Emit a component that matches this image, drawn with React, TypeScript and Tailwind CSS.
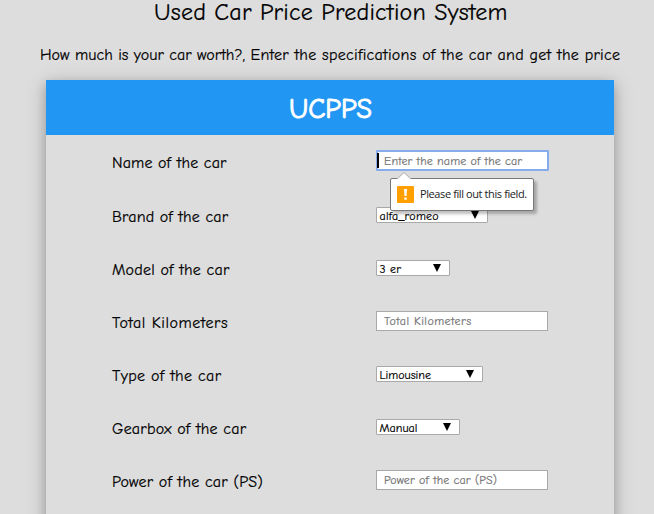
import type { ReactNode } from "react";

const comic = "font-['Comic_Sans_MS','Comic_Neue','Open_Sans',sans-serif]";

function Row({ label, spacing, height, children }: { label: string; spacing: string; height: string; children: ReactNode }) {
  return (
    <div className={`flex items-center ${height}`}>
      <div className={`w-[264px] shrink-0 whitespace-nowrap text-base leading-[22px] [-webkit-text-stroke:0.2px_#000] ${spacing}`}>{label}</div>
      {children}
    </div>
  );
}

function TextField({ placeholder, spacing }: { placeholder: string; spacing: string }) {
  return (
    <div className={`-mt-[3px] h-5 w-[172px] border border-[#a9a9a9] bg-white pl-[7px] text-xs leading-[18px] whitespace-nowrap text-[#757575] [-webkit-text-stroke:0.2px_#757575] ${spacing}`}>
      {placeholder}
    </div>
  );
}

function SelectField({ value, width, spacing, arrow }: { value: string; width: string; spacing: string; arrow: string }) {
  return (
    <div className={`-mt-[3px] flex h-4 items-center justify-between rounded-[1px] border border-[#a9a9a9] bg-white pl-[2.5px] ${arrow} ${width}`}>
      <span className={`pt-px text-xs leading-[14px] whitespace-nowrap [-webkit-text-stroke:0.2px_#000] ${spacing}`}>{value}</span>
      <svg className="h-2 w-2" viewBox="0 0 8 8">
        <path d="M0 0H8L4 8Z" fill="#000" />
      </svg>
    </div>
  );
}

export default function App() {
  return (
    <div className={`h-[514px] w-[654px] overflow-hidden bg-[#ddd] text-black ${comic}`}>
      <h1 className="ml-[154px] h-[30px] text-2xl leading-6 tracking-[0.22px] whitespace-nowrap [-webkit-text-stroke:0.2px_#000]">Used Car Price Prediction System</h1>
      <p className="ml-10 h-[50px] pt-[14px] text-base leading-[22px] whitespace-nowrap [-webkit-text-stroke:0.2px_#000]">
        <span className="tracking-[0.03px]">How much is your car worth?, </span>
        <span className="tracking-[0.27px]">Enter the specifications of the car and get the price</span>
      </p>
      <div className="ml-[46px] h-[600px] w-[568px] shadow-[0_4px_10px_0_rgba(0,0,0,0.2),0_4px_20px_0_rgba(0,0,0,0.19)]">
        <div className="flex h-[55px] items-center bg-[#2196f3] pt-0.5 pl-[243px]">
          <h2 className="text-[28px] leading-9 font-normal tracking-[-0.1px] text-white [-webkit-text-stroke:1px_#fff]">UCPPS</h2>
        </div>
        <div className="pl-[66px]">
          <Row label="Name of the car" spacing="tracking-[0.14px]" height="h-[55px]">
            <div className="relative -mt-1 h-[21px] w-[173px] rounded-[1px] border-2 border-[#86acee] bg-white pl-1.5">
              <div className="absolute top-px left-[-1px] h-[15px] w-0.5 bg-black" />
              <div className="pt-px text-xs leading-[17px] tracking-[0.14px] whitespace-nowrap text-[#757575] [-webkit-text-stroke:0.2px_#757575]">Enter the name of the car</div>
              <div className="absolute top-[26px] left-3 z-10 flex h-[33px] w-[144px] items-center rounded-[2px] border border-[#777] bg-white pl-1.5 shadow-[3px_3px_3px_rgba(0,0,0,0.25)]">
                <svg className="absolute top-[-7px] left-[6px] h-[8px] w-[14px]" viewBox="0 0 14 8">
                  <path d="M0 7L7 .5L14 7V8H0Z" fill="#fff" />
                  <path d="M0 7L7 .5L14 7" fill="none" stroke="#aaa" />
                </svg>
                <svg className="-mt-px h-[17px] w-[17px]" viewBox="0 0 17 17">
                  <rect width="17" height="17" rx="1" fill="#ffa000" />
                  <path d="M7 3H10L9.5 10H7.5ZM7.3 11.5H9.7V13.7H7.3Z" fill="#fff" />
                </svg>
                <span className="-mt-0.5 ml-1.5 font-['Open_Sans',sans-serif] text-[11px] leading-4 tracking-[-0.4px] whitespace-nowrap text-[#222]">Please fill out this field.</span>
              </div>
            </div>
          </Row>
          <Row label="Brand of the car" spacing="tracking-[0.14px]" height="h-[53px]">
            <SelectField value="alfa_romeo" width="w-[112px]" spacing="tracking-[0.2px]" arrow="pr-2" />
          </Row>
          <Row label="Model of the car" spacing="tracking-[0.2px]" height="h-[53px]">
            <SelectField value="3 er" width="w-[74px]" spacing="tracking-[0.2px]" arrow="pr-2" />
          </Row>
          <Row label="Total Kilometers" spacing="tracking-[0.55px]" height="h-[53px]">
            <TextField placeholder="Total Kilometers" spacing="tracking-[0.45px]" />
          </Row>
          <Row label="Type of the car" spacing="tracking-[0.33px]" height="h-[53px]">
            <SelectField value="Limousine" width="w-[107px]" spacing="tracking-normal" arrow="pr-2" />
          </Row>
          <Row label="Gearbox of the car" spacing="tracking-[0.2px]" height="h-[53px]">
            <SelectField value="Manual" width="w-[84px]" spacing="tracking-normal" arrow="pr-2" />
          </Row>
          <Row label="Power of the car (PS)" spacing="tracking-[0.2px]" height="h-[53px]">
            <TextField placeholder="Power of the car (PS)" spacing="tracking-[0.14px]" />
          </Row>
        </div>
      </div>
    </div>
  );
}
